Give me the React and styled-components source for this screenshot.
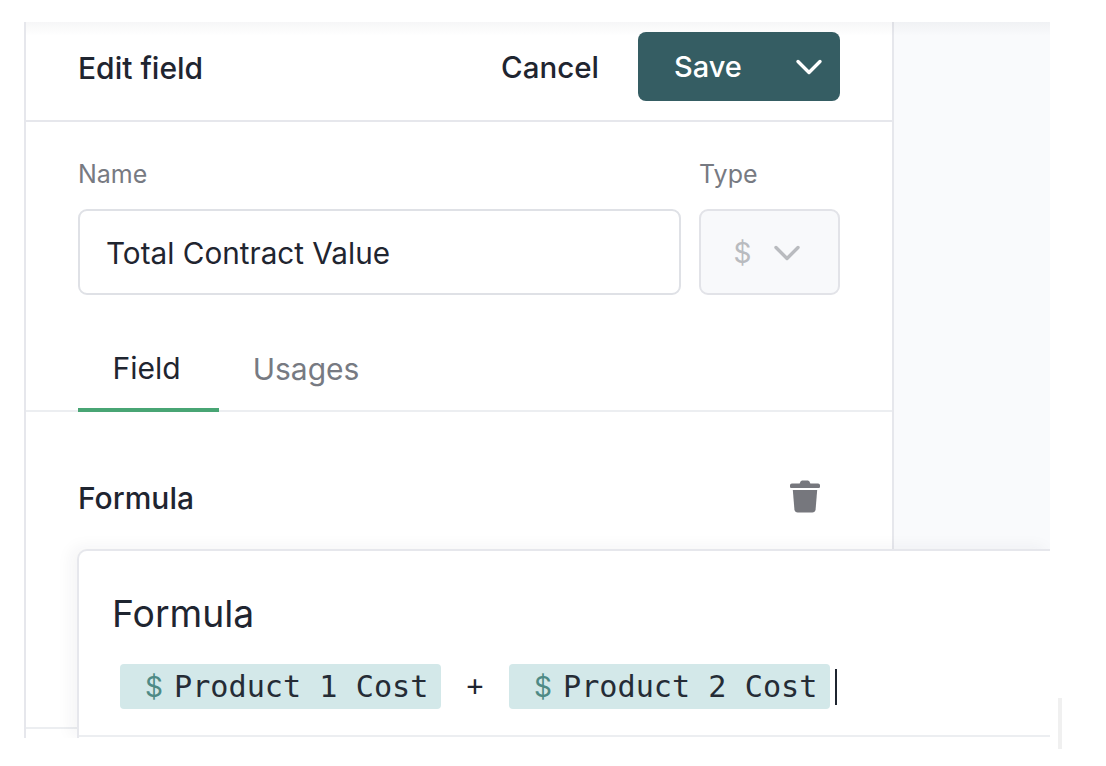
import styled, { createGlobalStyle } from 'styled-components';

const GlobalStyle = createGlobalStyle`
  html, body {
    margin: 0;
    background: #fff;
  }
  #root {
    height: 766px;
    box-sizing: border-box;
    padding: 22px 0 0 24px;
    overflow: hidden;
  }
  * {
    box-sizing: border-box;
  }
`;

const Frame = styled.div`
  position: relative;
  display: flex;
  width: 1026px;
  height: 716px;
  overflow: hidden;
  font-family: Inter, 'Liberation Sans', sans-serif;
  color: #1f2530;
`;

const Panel = styled.div`
  display: flex;
  flex-direction: column;
  width: 870px;
  height: 100%;
  background: #fff;
  border-left: 2px solid #e6e7ec;
  border-right: 2px solid #e6e7ec;
`;

const Side = styled.div`
  flex: 1;
  background: #f9fafc;
`;

const TopShade = styled.div`
  position: absolute;
  top: 0;
  left: 2px;
  right: 0;
  height: 14px;
  background: linear-gradient(to bottom, rgba(30, 35, 50, 0.04), rgba(30, 35, 50, 0));
  pointer-events: none;
`;

const Header = styled.header`
  display: flex;
  align-items: center;
  justify-content: space-between;
  height: 100px;
  padding: 0 52px 2px 52px;
  border-bottom: 2px solid #e6e7ec;
`;

const Title = styled.h1`
  margin: -5px 0 0;
  font-size: 30px;
  font-weight: 500;
  line-height: 36px;
`;

const Actions = styled.div`
  display: flex;
  align-items: center;
  gap: 39px;
  margin-top: -7px;
`;

const CancelButton = styled.button`
  padding: 0;
  border: 0;
  background: none;
  font: 500 29.5px/36px Inter, 'Liberation Sans', sans-serif;
  color: #1f2530;
`;

const SaveButton = styled.button`
  display: flex;
  align-items: center;
  justify-content: space-between;
  width: 202px;
  height: 69px;
  padding: 0 16px 0 36px;
  border: 0;
  border-radius: 8px;
  background: #355d63;
  color: #fff;
  font: 500 29px/36px Inter, 'Liberation Sans', sans-serif;
`;

const Fields = styled.div`
  display: flex;
  gap: 18px;
  padding: 33px 52px 0 52px;
`;

const Field = styled.div`
  display: flex;
  flex-direction: column;
  flex: ${(p) => (p.$grow ? 1 : '0 0 141px')};
  min-width: 0;
`;

const Label = styled.label`
  font-size: 25px;
  line-height: 38px;
  color: #777a82;
  margin-bottom: 16px;
`;

const TextInput = styled.div`
  display: flex;
  align-items: center;
  height: 86px;
  padding: 2px 26px 0;
  border: 2px solid #dfe1e6;
  border-radius: 9px;
  background: #fff;
  font-size: 29.7px;
`;

const TypeSelect = styled.div`
  display: flex;
  align-items: center;
  justify-content: center;
  gap: 21px;
  height: 86px;
  padding: 2px 3px 0 0;
  border: 2px solid #e2e3e8;
  border-radius: 9px;
  background: #f8f9fb;
  color: #b9bbbf;
  font-size: 28px;
`;

const Tabs = styled.nav`
  display: flex;
  gap: 35px;
  height: 117px;
  padding: 0 0 0 52px;
  border-bottom: 2px solid #eceef1;
`;

const Tab = styled.div`
  display: flex;
  align-items: center;
  justify-content: center;
  width: ${(p) => p.$width}px;
  height: ${(p) => (p.$active ? '117px' : '115px')};
  padding-top: 33px;
  padding-right: ${(p) => (p.$active ? '4px' : '0')};
  font-size: 30px;
  color: ${(p) => (p.$active ? '#1f2530' : '#777a82')};
  border-bottom: ${(p) => (p.$active ? '4px solid #48a574' : '0')};
`;

const FormulaSection = styled.section`
  display: flex;
  align-items: flex-start;
  justify-content: space-between;
  height: 317px;
  padding: 68px 72px 0 52px;
  border-bottom: 2px solid #eceef1;
`;

const SectionTitle = styled.h2`
  margin: 0;
  font-size: 30px;
  font-weight: 500;
  line-height: 36px;
`;

const Card = styled.div`
  position: absolute;
  top: 527px;
  left: 53px;
  right: 0;
  bottom: 0;
  display: flex;
  flex-direction: column;
  padding: 40px 0 0 33px;
  background: #fff;
  border-top: 2px solid #e6e7ec;
  border-left: 2px solid #e6e7ec;
  border-top-left-radius: 10px;
  box-shadow: -6px -2px 16px rgba(30, 35, 50, 0.05);
`;

const CardTitle = styled.div`
  font-size: 37.3px;
  line-height: 46px;
  color: #1f2530;
`;

const Expression = styled.div`
  display: flex;
  align-items: center;
  margin: 27px 0 0 8px;
  height: 45px;
  font-family: 'DejaVu Sans Mono', 'Liberation Mono', monospace;
  font-size: 30.2px;
`;

const Chip = styled.span`
  display: flex;
  align-items: center;
  width: 321px;
  height: 45px;
  padding-left: 25px;
  border-radius: 4px;
  background: #d3e8e9;
  color: #252c36;
`;

const ChipSign = styled.span`
  margin-right: 11px;
  color: #4e8a85;
  font-family: Inter, 'Liberation Sans', sans-serif;
  font-size: 28px;
`;

const Operator = styled.span`
  width: 68px;
  text-align: center;
  color: #1f2530;
  font-size: 28px;
`;

const Caret = styled.span`
  width: 2px;
  height: 36px;
  margin-left: 5px;
  background: #1f2530;
`;

const CardRule = styled.div`
  position: absolute;
  left: 0;
  right: 0;
  bottom: 1px;
  height: 2px;
  background: #eceef1;
`;

const ScrollThumb = styled.div`
  position: absolute;
  top: 698px;
  left: 1058px;
  width: 4px;
  height: 51px;
  background: #f0f0f0;
`;

const Chevron = ({ size = 30, width = 3.4, color = 'currentColor' }) => (
  <svg width={size} height={size} viewBox="0 0 30 30" fill="none">
    <path
      d="M4 9.5 15 20.5 26 9.5"
      stroke={color}
      strokeWidth={width}
      strokeLinecap="round"
      strokeLinejoin="round"
    />
  </svg>
);

const TrashIcon = () => (
  <svg width="30" height="33" viewBox="0 0 32 34" fill="#76777d">
    <path d="M11 1.5C11.5.6 12.4 0 13.4 0h5.2c1 0 1.9.6 2.4 1.5l.7 1.5H30c1.1 0 2 .9 2 2v1.5c0 .8-.7 1.5-1.5 1.5h-29C.7 8 0 7.3 0 6.5V5c0-1.1.9-2 2-2h8.3L11 1.5Z" />
    <path d="M3 10h26l-1.7 20.8C27.1 32.6 25.6 34 23.8 34H8.2c-1.8 0-3.3-1.4-3.5-3.2L3 10Z" />
  </svg>
);

export default function App() {
  return (
    <>
      <GlobalStyle />
      <Frame>
        <Panel>
          <Header>
            <Title>Edit field</Title>
            <Actions>
              <CancelButton>Cancel</CancelButton>
              <SaveButton>
                Save
                <Chevron />
              </SaveButton>
            </Actions>
          </Header>
          <Fields>
            <Field $grow>
              <Label>Name</Label>
              <TextInput>Total Contract Value</TextInput>
            </Field>
            <Field>
              <Label>Type</Label>
              <TypeSelect>
                $
                <Chevron color="#b9bbbf" />
              </TypeSelect>
            </Field>
          </Fields>
          <Tabs>
            <Tab $active $width={141}>Field</Tab>
            <Tab $width={104}>Usages</Tab>
          </Tabs>
          <FormulaSection>
            <SectionTitle>Formula</SectionTitle>
            <TrashIcon />
          </FormulaSection>
        </Panel>
        <Side />
        <TopShade />
        <Card>
          <CardTitle>Formula</CardTitle>
          <Expression>
            <Chip>
              <ChipSign>$</ChipSign>
              Product 1 Cost
            </Chip>
            <Operator>+</Operator>
            <Chip>
              <ChipSign>$</ChipSign>
              Product 2 Cost
            </Chip>
            <Caret />
          </Expression>
          <CardRule />
        </Card>
      </Frame>
      <ScrollThumb />
    </>
  );
}
